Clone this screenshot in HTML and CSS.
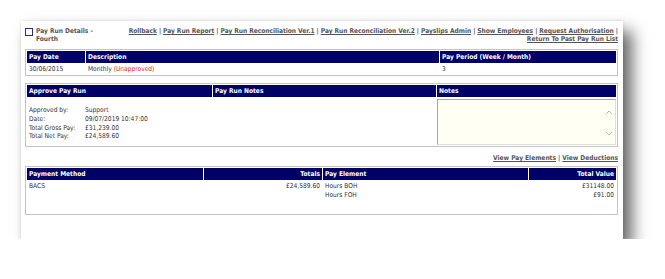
FILE: index.html
```html
<!DOCTYPE html>
<html lang="en">
<head>
    <meta charset="UTF-8">
    <title>Pay Run Details</title>
    <link rel="stylesheet" href="styles.css">
</head>
<body>

    <div class="card">
        <div class="top">
            <div class="title">
                <span class="check"></span>
                <span>Pay Run Details -<br>Fourth</span>
            </div>
            <div class="links">
                <div class="line"><a href="#">Rollback</a> | <a href="#">Pay Run Report</a> | <a href="#">Pay Run Reconciliation Ver.1</a> | <a href="#">Pay Run Reconciliation Ver.2</a> | <a href="#">Payslips Admin</a> | <a href="#">Show Employees</a> | <a href="#">Request Authorisation</a> |</div>
                <div class="line"><a href="#">Return To Past Pay Run List</a></div>
            </div>
        </div>

        <table class="grid pay_date">
            <tr>
                <th class="c_date">Pay Date</th>
                <th class="c_desc">Description</th>
                <th>Pay Period (Week / Month)</th>
            </tr>
            <tr>
                <td>30/06/2015</td>
                <td>Monthly <span class="red">(Unapproved)</span></td>
                <td>3</td>
            </tr>
        </table>

        <table class="grid approve">
            <tr>
                <th class="c_appr">Approve Pay Run</th>
                <th class="c_prn">Pay Run Notes</th>
                <th>Notes</th>
            </tr>
            <tr>
                <td class="appr_info">
                    <div class="info_row"><span>Approved by:</span><span>Support</span></div>
                    <div class="info_row"><span>Date:</span><span>09/07/2019 10:47:00</span></div>
                    <div class="info_row"><span>Total Gross Pay:</span><span>£31,239.00</span></div>
                    <div class="info_row"><span>Total Net Pay:</span><span>£24,589.60</span></div>
                </td>
                <td></td>
                <td class="notes_cell">
                    <div class="notes_box">
                        <svg class="arrows" width="8" height="30" viewBox="0 0 8 30">
                            <path d="M1 6 L4 3 L7 6" fill="none" stroke="#b5b5b5" stroke-width="1"/>
                            <path d="M1 24 L4 27 L7 24" fill="none" stroke="#b5b5b5" stroke-width="1"/>
                        </svg>
                    </div>
                </td>
            </tr>
        </table>

        <div class="view_links">
            <a href="#">View Pay Elements</a> | <a href="#">View Deductions</a>
        </div>

        <table class="grid payments">
            <tr>
                <th class="c_method">Payment Method</th>
                <th class="c_totals right">Totals</th>
                <th class="c_elem">Pay Element</th>
                <th class="right">Total Value</th>
            </tr>
            <tr>
                <td>BACS</td>
                <td class="right">£24,589.60</td>
                <td>Hours BOH<br>Hours FOH</td>
                <td class="right">£31148.00<br>£91.00</td>
            </tr>
        </table>
    </div>

</body>
</html>
```

FILE: styles.css
```css
*{
    box-sizing: border-box;
}
body{
    margin: 0;
    background-color: #fff;
    font-family: "DejaVu Sans Condensed", "DejaVu Sans", sans-serif;
    font-size: 6.6px;
    color: #333;
}
a{
    color: #555;
    text-decoration: underline;
}

/* white sheet with the heavy drop shadow */
.card{
    margin: 21px 0 0 21px;
    width: 602px;
    height: 218px;
    padding: 5px 5px 0 4px;
    background-color: #fff;
    box-shadow: 9px 10px 15px rgba(0, 0, 0, 0.6), 0 0 3px rgba(0, 0, 0, 0.12);
}

.top{
    display: flex;
    height: 23px;
}
.title{
    display: flex;
    flex-shrink: 0;
    gap: 3px;
    width: 100px;
    padding-top: 2px;
    font-weight: bold;
    color: #555;
    line-height: 7.5px;
}
.check{
    width: 8px;
    height: 8px;
    border: 1.5px solid #2a2a8a;
}
.links{
    flex: 1;
    padding-top: 1px;
    text-align: right;
    font-weight: bold;
    color: #555;
    line-height: 8px;
}
.links .line{
    white-space: nowrap;
    letter-spacing: -0.03px;
}

.grid{
    width: 100%;
    border: 1px solid #c4c4c4;
    border-spacing: 1px;
}
.grid th{
    height: 12px;
    padding: 0 2px;
    background-color: #000066;
    color: #fff;
    font-weight: bold;
    text-align: left;
    line-height: 12px;
}
.grid td{
    padding: 0 2px;
    vertical-align: top;
    line-height: 9px;
}
.grid .right{
    text-align: right;
}
.red{
    color: #e8201c;
}

.pay_date td{
    height: 10px;
    line-height: 10px;
}
.c_date{
    width: 58px;
}
.c_desc{
    width: 353px;
}

.approve{
    margin-top: 7px;
}
.c_appr{
    width: 185px;
}
.c_prn{
    width: 223px;
}
.appr_info{
    padding-top: 8px !important;
}
.info_row{
    display: flex;
    line-height: 8.8px;
}
.info_row span:first-child{
    width: 56px;
}
.notes_cell{
    padding: 1px 0 0 0 !important;
}
.notes_box{
    position: relative;
    height: 46px;
    border: 1px solid #a8a8a8;
    border-right-color: #ddd;
    border-bottom-color: #ddd;
    background-color: #fffff4;
}
.arrows{
    position: absolute;
    right: 2px;
    top: 8px;
}

.view_links{
    height: 19px;
    padding-top: 7px;
    text-align: right;
    font-weight: bold;
    color: #555;
    line-height: 8px;
}

.payments td{
    height: 32px;
    padding-top: 1px;
}
.c_method{
    width: 176px;
}
.c_totals{
    width: 118px;
}
.c_elem{
    width: 205px;
}
```
